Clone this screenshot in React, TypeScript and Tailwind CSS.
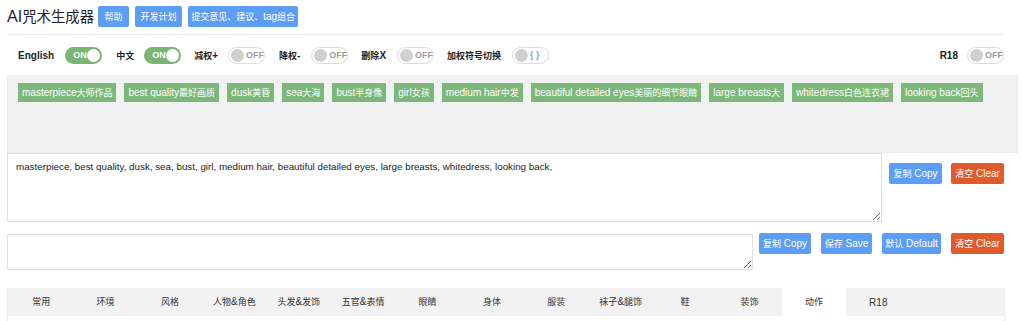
import React from 'react';

// tags shown in the selected area
const tags = [
  'masterpiece大师作品',
  'best quality最好画质',
  'dusk黄昏',
  'sea大海',
  'bust半身像',
  'girl女孩',
  'medium hair中发',
  'beautiful detailed eyes美丽的细节眼睛',
  'large breasts大',
  'whitedress白色连衣裙',
  'looking back回头',
];

const tabs = ['常用', '环境', '风格', '人物&角色', '头发&发饰', '五官&表情', '眼睛', '身体', '服装', '袜子&腿饰', '鞋', '装饰', '动作', 'R18'];

// the CJK glyphs in the shot are a bit narrower than Noto's, so shrink those runs
function T({ children }: { children: string }) {
  const parts = children.split(/([\u3000-\u303f\u4e00-\u9fff\uff00-\uffef]+)/).filter(Boolean);
  return (
    <span>
      {parts.map((p, i) =>
        /[\u3000-\u303f\u4e00-\u9fff\uff00-\uffef]/.test(p) ? (
          <span key={i} className="text-[0.9em]">{p}</span>
        ) : (
          <React.Fragment key={i}>{p}</React.Fragment>
        )
      )}
    </span>
  );
}

function Toggle({ on, offText = 'OFF' }: { on?: boolean; offText?: string }) {
  if (on) {
    return (
      <div className="relative w-[37px] h-[17px] rounded-full bg-[#79b575] shrink-0">
        <span className="absolute left-[8px] top-0 leading-[17px] text-[9px] text-white">ON</span>
        <span className="absolute right-[2px] top-[2px] w-[13px] h-[13px] rounded-full bg-white" />
      </div>
    );
  }
  return (
    <div className="relative w-[37px] h-[17px] rounded-full bg-white border border-[#dcdcdc] shrink-0">
      <span className="absolute left-[2px] top-[1px] w-[13px] h-[13px] rounded-full bg-[#cfcfcf]" />
      <span className="absolute left-[17px] top-0 leading-[15px] text-[9px] text-[#a0a0a0]">{offText}</span>
    </div>
  );
}

function Btn({ children, red, w }: { children: string; red?: boolean; w: string }) {
  return (
    <button
      className={`${w} h-[21px] rounded-[2px] text-[10px] text-white flex items-center justify-center shrink-0 whitespace-nowrap ${
        red ? 'bg-[#e05a2c]' : 'bg-[#5c9ef5]'
      }`}
    >
      <T>{children}</T>
    </button>
  );
}

export default function App() {
  return (
    <div
      className="w-[1022px] h-[321px] overflow-hidden bg-white text-[#222] pl-[7px] pr-[18px] pt-[6px]"
      style={{ fontFamily: '"Liberation Sans", "Noto Sans CJK SC", sans-serif' }}
    >
      {/* header */}
      <div className="flex items-center h-[21px]">
        <h1 className="text-[16px] leading-[21px] mr-[4px]">
          <T>AI咒术生成器</T>
        </h1>
        <div className="flex gap-[6px]">
          <Btn w="w-[31px]">帮助</Btn>
          <Btn w="w-[47px]">开发计划</Btn>
          <Btn w="w-[110px]">提交意见、建议、tag组合</Btn>
        </div>
      </div>
      <div className="mt-[7px] border-t border-[#e8e8e8] mr-[1px]" />

      {/* switches */}
      <div className="mt-[12px] h-[17px] flex items-center pl-[11px] text-[10px] font-bold">
        <span className="mr-[11px]">English</span>
        <Toggle on />
        <span className="ml-[14px] mr-[10px]"><T>中文</T></span>
        <Toggle on />
        <span className="ml-[13px] mr-[10px]"><T>减权+</T></span>
        <Toggle />
        <span className="ml-[14px] mr-[11px]"><T>降权-</T></span>
        <Toggle />
        <span className="ml-[13px] mr-[11px]"><T>删除X</T></span>
        <Toggle />
        <span className="ml-[13px] mr-[11px]"><T>加权符号切换</T></span>
        <Toggle offText="{ }" />
        <span className="ml-auto mr-[9px]">R18</span>
        <Toggle />
      </div>

      {/* selected tags */}
      <div className="mt-[11px] w-[1011px] h-[78px] bg-[#f2f2f2] border border-[#ebebeb] pt-[7px] pl-[10px]">
        <div className="flex flex-wrap gap-x-[8px] gap-y-[6px]">
          {tags.map((t) => (
            <span key={t} className="h-[19px] px-[4px] bg-[#7cb87a] text-white text-[10px] leading-[19px] whitespace-nowrap">
              <T>{t}</T>
            </span>
          ))}
        </div>
      </div>

      {/* prompt output */}
      <div className="flex items-start">
        <textarea
          className="flex-1 h-[69px] border border-[#dedede] px-[8px] py-[6px] text-[9.8px] leading-[14px] text-[#222] resize-y outline-none"
          defaultValue="masterpiece, best quality, dusk, sea, bust, girl, medium hair, beautiful detailed eyes, large breasts, whitedress, looking back,"
        />
        <div className="flex gap-[9px] ml-[7px] mt-[10px]">
          <Btn w="w-[53px]">复制 Copy</Btn>
          <Btn w="w-[53px]" red>清空 Clear</Btn>
        </div>
      </div>

      <div className="mt-[12px] flex items-start">
        <textarea className="flex-1 h-[36px] border border-[#dedede] px-[8px] py-[6px] text-[10px] resize-y outline-none" />
        <div className="flex gap-[10px] ml-[6px] -mt-[1px]">
          <Btn w="w-[52px]">复制 Copy</Btn>
          <Btn w="w-[51px]">保存 Save</Btn>
          <Btn w="w-[59px]">默认 Default</Btn>
          <Btn w="w-[53px]" red>清空 Clear</Btn>
        </div>
      </div>

      {/* category tabs */}
      <div className="mt-[18px] border-l border-r border-[#ececec] mr-[-1px]">
        <div className="h-[28px] bg-[#f2f2f2] flex pl-[1px]">
          {tabs.map((t) => (
            <div
              key={t}
              className={`w-[64.4px] h-full flex items-center justify-center text-[10px] text-[#333] ${
                t === '动作' ? 'bg-white' : ''
              }`}
            >
              <T>{t}</T>
            </div>
          ))}
        </div>
        <div className="h-[20px] bg-white" />
      </div>
    </div>
  );
}
